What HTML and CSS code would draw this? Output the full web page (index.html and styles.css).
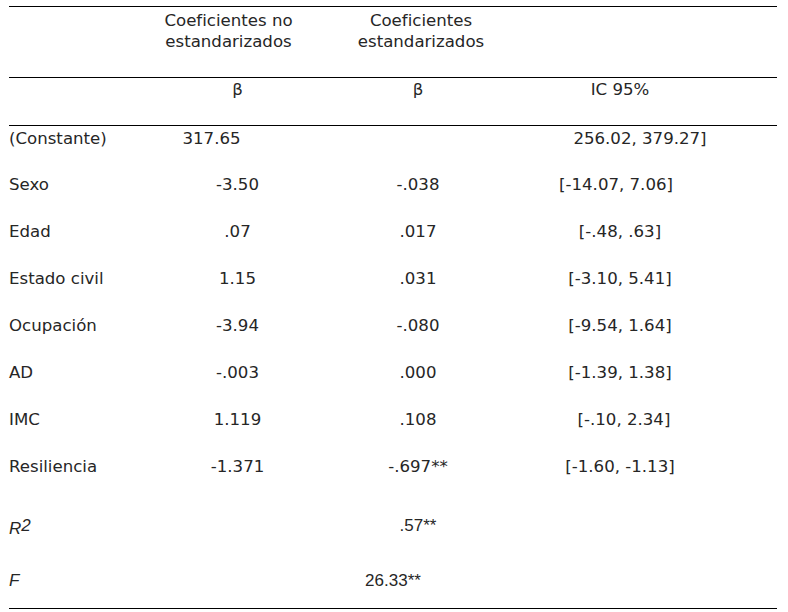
FILE: index.html
```html
<!DOCTYPE html>
<html lang="es">
<head>
<meta charset="utf-8">
<title>Tabla de regresión</title>
<link rel="stylesheet" href="styles.css">
</head>
<body>
<div class="table">
  <div class="row head1">
    <div class="cell"></div>
    <div class="cell c hd-a">Coeficientes no<br>estandarizados</div>
    <div class="cell c hd-b">Coeficientes<br>estandarizados</div>
    <div class="cell"></div>
  </div>
  <div class="row head2">
    <div class="cell"></div>
    <div class="cell c">β</div>
    <div class="cell c">β</div>
    <div class="cell c ic">IC 95%</div>
  </div>
  <div class="row body first">
    <div class="cell">(Constante)</div>
    <div class="cell c const">317.65</div>
    <div class="cell c"></div>
    <div class="cell c const-ic">256.02, 379.27]</div>
  </div>
  <div class="row body">
    <div class="cell">Sexo</div>
    <div class="cell c">-3.50</div>
    <div class="cell c">-.038</div>
    <div class="cell c ci-l">[-14.07, 7.06]</div>
  </div>
  <div class="row body">
    <div class="cell">Edad</div>
    <div class="cell c">.07</div>
    <div class="cell c">.017</div>
    <div class="cell c">[-.48, .63]</div>
  </div>
  <div class="row body">
    <div class="cell">Estado civil</div>
    <div class="cell c">1.15</div>
    <div class="cell c">.031</div>
    <div class="cell c">[-3.10, 5.41]</div>
  </div>
  <div class="row body">
    <div class="cell">Ocupación</div>
    <div class="cell c">-3.94</div>
    <div class="cell c">-.080</div>
    <div class="cell c">[-9.54, 1.64]</div>
  </div>
  <div class="row body">
    <div class="cell">AD</div>
    <div class="cell c">-.003</div>
    <div class="cell c">.000</div>
    <div class="cell c">[-1.39, 1.38]</div>
  </div>
  <div class="row body">
    <div class="cell">IMC</div>
    <div class="cell c">1.119</div>
    <div class="cell c">.108</div>
    <div class="cell c ci-r">[-.10, 2.34]</div>
  </div>
  <div class="row body resil">
    <div class="cell">Resiliencia</div>
    <div class="cell c">-1.371</div>
    <div class="cell c">-.697**</div>
    <div class="cell c">[-1.60, -1.13]</div>
  </div>
  <div class="row stat r2">
    <div class="cell"><i>R</i><span class="sup">2</span></div>
    <div class="cell c"></div>
    <div class="cell c">.57**</div>
    <div class="cell c"></div>
  </div>
  <div class="row stat f">
    <div class="cell"><i>F</i></div>
    <div class="cell c"></div>
    <div class="cell c fval">26.33**</div>
    <div class="cell c"></div>
  </div>
</div>
</body>
</html>
```

FILE: styles.css
```css
html, body {
  margin: 0;
  padding: 0;
  background: #fff;
}
body {
  font-family: "DejaVu Sans", sans-serif;
  font-size: 16.6px;
  color: #262626;
}
.table {
  margin: 6px 0 0 9px;
  width: 768px;
  border-top: 1px solid #000;
  border-bottom: 1px solid #000;
}
.row {
  display: grid;
  grid-template-columns: 146px 165px 196px 208px 1fr;
  line-height: 21px;
}
.cell.c { text-align: center; }
.head1 {
  height: 71px;
  padding-top: 3px;
  box-sizing: border-box;
  border-bottom: 1px solid #000;
}
.hd-a { padding-right: 18px; }
.hd-b { padding-left: 6px; }
.head2 {
  height: 48px;
  padding-top: 1px;
  box-sizing: border-box;
  border-bottom: 1px solid #000;
}
.body {
  height: 47px;
  padding-top: 1px;
  box-sizing: border-box;
}
.body.first { height: 47px; padding-top: 2px; }
.body.resil { height: 60px; }
.stat {
  font-family: "Liberation Sans Narrow", "Liberation Sans", sans-serif;
  font-stretch: condensed;
  font-size: 17px;
}
.sup {
  font-style: italic;
  vertical-align: 3px;
}
.r2 { height: 55px; }
.f { height: 38px; }
.const { padding-right: 52px; }
.const-ic { padding-left: 40px; }
.ci-l { padding-right: 8px; }
.ci-r { padding-left: 8px; }
.fval { padding-right: 50px; }
```
